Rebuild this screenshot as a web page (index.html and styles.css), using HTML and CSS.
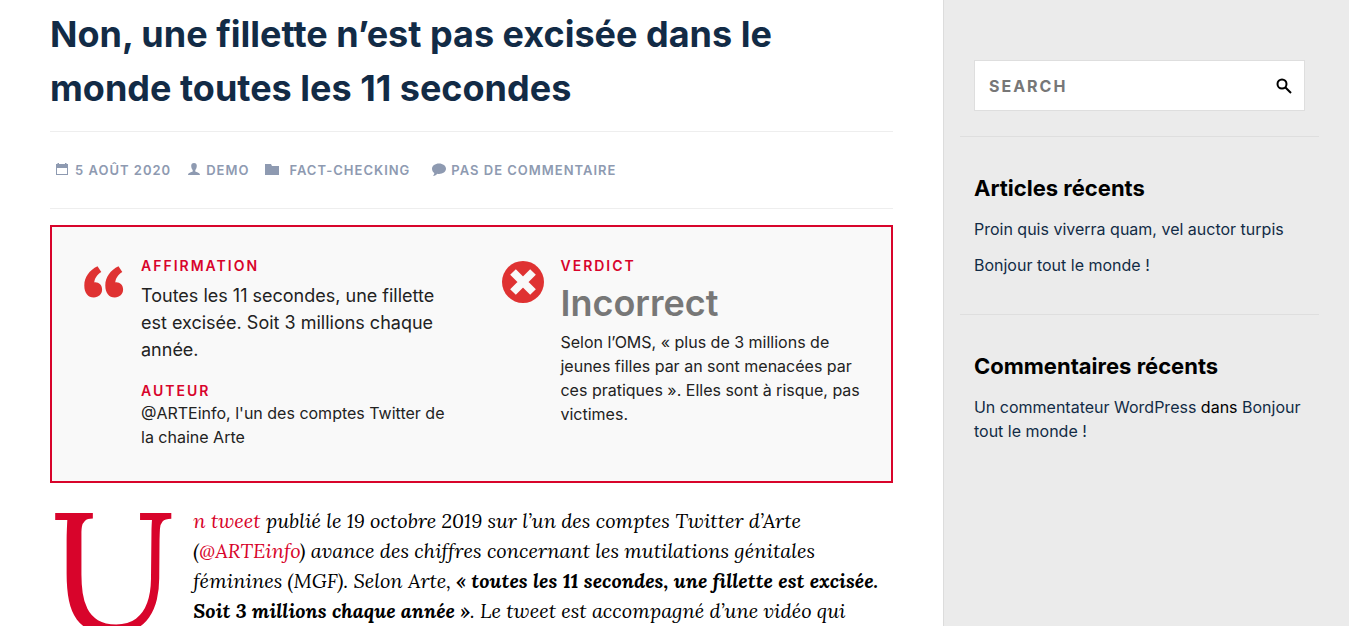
FILE: index.html
```
<!DOCTYPE html>
<html lang="fr">
<head>
<meta charset="utf-8">
<meta name="viewport" content="width=device-width, initial-scale=1">
<title>Non, une fillette n’est pas excisée dans le monde toutes les 11 secondes</title>
<link rel="stylesheet" href="styles.css">
</head>
<body>
<div class="page">
  <main class="content">
    <article>
      <h1 class="title">Non, une fillette n’est pas excisée dans le monde toutes les 11 secondes</h1>
      <ul class="meta">
        <li class="meta-item meta-date">
          <svg class="meta-icon" viewBox="0 0 14 14" aria-hidden="true"><path fill-rule="evenodd" d="M0 1h1.500V0h1.500v1h6V0h1.500v1H12v11H0zM1 5v6h10V5z"/></svg>
          <time datetime="2020-08-05">5 août 2020</time>
        </li>
        <li class="meta-item meta-author">
          <svg class="meta-icon" viewBox="0 0 14 14" aria-hidden="true"><path d="M7 0c1.900 0 2.800 1.200 2.800 2.800 0 1.900-.7 3.200-1.500 4.200v1.500c1.200.9 4.700 1 4.700 3.500H1c0-2.500 3.500-2.600 4.700-3.500V7C4.900 6 4.200 4.700 4.200 2.800 4.200 1.200 5.100 0 7 0z"/></svg>
          <a href="#author">demo</a>
        </li>
        <li class="meta-item meta-category">
          <svg class="meta-icon" viewBox="0 0 14 14" aria-hidden="true"><path d="M0 1h6l1 2h7v9H0z"/></svg>
          <a href="#category">Fact-checking</a>
        </li>
        <li class="meta-item">
          <svg class="meta-icon" viewBox="0 0 14 14" aria-hidden="true"><path d="M7 .5c3.900 0 7 2.300 7 5.200s-3.100 5.200-7 5.200c-.6 0-1.200-.1-1.700-.2C4.500 11.900 3 12.700 1 12.900c.8-.8 1.300-1.800 1.300-2.900C.9 9 0 7.400 0 5.700 0 2.800 3.100.5 7 .5z"/></svg>
          <a href="#comments">Pas de commentaire</a>
        </li>
      </ul>
      <section class="review">
        <div class="review-col">
          <svg class="review-icon" viewBox="0 0 44 44" aria-hidden="true"><path d="M15.500 6.300C7.500 10.200 2.300 17 2.300 25.500c0 7.500 3.700 12 9.500 12 4.800 0 8.300-3.400 8.300-7.900 0-4.400-2.900-7.300-6.900-7.300-.7 0-.6.1-.9.300.1-3.500 2.600-7.900 7-10.500z"/><path d="M36.500 6.300C28.500 10.200 23.300 17 23.300 25.500c0 7.500 3.700 12 9.500 12 4.800 0 8.300-3.400 8.300-7.900 0-4.400-2.900-7.300-6.900-7.300-.7 0-.6.1-.9.300.1-3.500 2.600-7.900 7-10.500z"/></svg>
          <div class="review-text">
            <h2 class="label">Affirmation</h2>
            <p class="claim">Toutes les 11 secondes, une fillette est excisée. Soit 3 millions chaque année.</p>
            <h2 class="label">Auteur</h2>
            <p class="detail">@ARTEinfo, l'un des comptes Twitter de la chaine Arte</p>
          </div>
        </div>
        <div class="review-col">
          <svg class="review-icon" viewBox="0 0 44 44" aria-hidden="true"><circle cx="22" cy="22" r="21"/><path class="cross" d="M12 12l20 20M32 12L12 32"/></svg>
          <div class="review-text">
            <h2 class="label">Verdict</h2>
            <p class="verdict">Incorrect</p>
            <p class="detail">Selon l’OMS, « plus de 3 millions de jeunes filles par an sont menacées par ces pratiques ». Elles sont à risque, pas victimes.</p>
          </div>
        </div>
      </section>
      <p class="story"><a href="#tweet"><span class="dropcap">U</span>n tweet</a> publié le 19 octobre 2019 sur l’un des comptes Twitter d’Arte (<a href="#arteinfo">@ARTEinfo</a>) avance des chiffres concernant les mutilations génitales féminines (MGF). Selon Arte, <strong>« toutes les 11 secondes, une fillette est excisée. Soit 3 millions chaque année »</strong>. Le tweet est accompagné d’une vidéo qui</p>
    </article>
  </main>
  <aside class="sidebar">
    <section class="widget">
      <form class="search" role="search">
        <input class="search-field" type="search" placeholder="SEARCH" aria-label="Search">
        <button class="search-button" type="submit" aria-label="Search">
          <svg class="search-icon" viewBox="0 0 16 16" aria-hidden="true"><circle cx="6" cy="6" r="4.500"/><path d="M9.200 9.200l5.800 5.800"/></svg>
        </button>
      </form>
    </section>
    <section class="widget">
      <h2 class="widget-title">Articles récents</h2>
      <ul class="widget-list">
        <li><a href="#proin">Proin quis viverra quam, vel auctor turpis</a></li>
        <li><a href="#bonjour">Bonjour tout le monde !</a></li>
      </ul>
    </section>
    <section class="widget">
      <h2 class="widget-title">Commentaires récents</h2>
      <ul class="widget-list">
        <li><a href="#commentateur">Un commentateur WordPress</a> dans <a href="#bonjour">Bonjour tout le monde !</a></li>
      </ul>
    </section>
  </aside>
</div>
</body>
</html>
```

FILE: styles.css
```
* {
  box-sizing: border-box;
}

body,
h1,
h2,
p,
ul {
  margin: 0;
  padding: 0;
}

body {
  font-family: Inter, "Liberation Sans", sans-serif;
  font-size: 16px;
  line-height: 24px;
  color: #000;
  background: #fff;
}

ul {
  list-style: none;
}

a {
  color: inherit;
  text-decoration: none;
}

.page {
  display: flex;
  height: 100vh;
  overflow: hidden;
}

.content {
  flex: 1;
  min-width: 0;
  padding: 7px 50px 0;
}

.title {
  padding-bottom: 16px;
  font-size: 36px;
  line-height: 54px;
  font-weight: 700;
  color: #122b46;
}

.meta {
  display: flex;
  align-items: center;
  margin-bottom: 16px;
  padding: 26px 6px;
  border: solid #eee;
  border-width: 1px 0;
  font-size: 13px;
  font-weight: 600;
  letter-spacing: 1px;
  text-transform: uppercase;
  color: #8e9ab1;
}

.meta-item {
  display: flex;
  align-items: center;
  gap: 5px;
  margin-right: 16px;
}

.meta-category {
  gap: 10px;
  margin-right: 22px;
}

.meta-icon {
  width: 14px;
  height: 14px;
  fill: currentColor;
}

.review {
  display: grid;
  grid-template-columns: 1fr 1fr;
  padding: 28px 30px 32px;
  border: 2px solid #d8042b;
  background: #f9f9f9;
}

.review-col {
  display: flex;
  gap: 15px;
  padding-right: 14px;
}

.review-col + .review-col {
  padding-left: 30px;
  padding-right: 0;
}

.review-icon {
  flex: none;
  width: 44px;
  height: 44px;
  margin-top: 5px;
  fill: #df3232;
}

.cross {
  stroke: #f9f9f9;
  stroke-width: 8px;
}

.review-text {
  flex: 1;
  color: #222;
}

.label {
  font-size: 14px;
  line-height: 21px;
  font-weight: 600;
  letter-spacing: 2px;
  text-transform: uppercase;
  color: #d8042b;
}

.claim {
  margin: 6px 0 17px;
  font-size: 18px;
  line-height: 27px;
}

.detail {
  font-size: 16px;
  line-height: 24px;
}

.verdict {
  margin: 2px 0;
  font-size: 36px;
  line-height: 50px;
  font-weight: 600;
  color: #777;
}

.story {
  margin-top: 23px;
  font-family: Lora, "Liberation Serif", serif;
  font-size: 20px;
  line-height: 30px;
  font-style: italic;
}

.story a {
  color: #d8042b;
}

.dropcap {
  float: left;
  margin-right: 17px;
  font-size: 168px;
  line-height: 128px;
  font-style: normal;
}

.sidebar {
  flex: 0 0 30.1%;
  min-width: 0;
  padding: 60px 30px 0 16px;
  border-left: 1px solid #dcdcdc;
  background: #ebebeb;
}

.widget {
  padding: 0 14px 37px;
}

.widget:first-child {
  padding-bottom: 25px;
}

.widget + .widget {
  padding-top: 36px;
  border-top: 1px solid #dedede;
}

.widget-title {
  margin-bottom: 14px;
  font-size: 22px;
  line-height: 30px;
  font-weight: 700;
}

.widget-list li + li {
  margin-top: 12px;
}

.widget-list a {
  color: #122b46;
}

.search {
  display: flex;
  border: 1px solid #dedede;
  background: #fff;
}

.search-field {
  flex: 1;
  width: 100%;
  min-width: 0;
  height: 49px;
  padding: 0 14px;
  border: 0;
  background: none;
  font: 700 16px/24px Inter, "Liberation Sans", sans-serif;
  letter-spacing: 2px;
}

.search-field::placeholder {
  color: #777;
  opacity: 1;
}

.search-button {
  display: flex;
  align-items: center;
  padding: 0 12px;
  border: 0;
  background: none;
}

.search-icon {
  width: 16px;
  height: 16px;
  fill: none;
  stroke: #000;
  stroke-width: 2px;
}
```
